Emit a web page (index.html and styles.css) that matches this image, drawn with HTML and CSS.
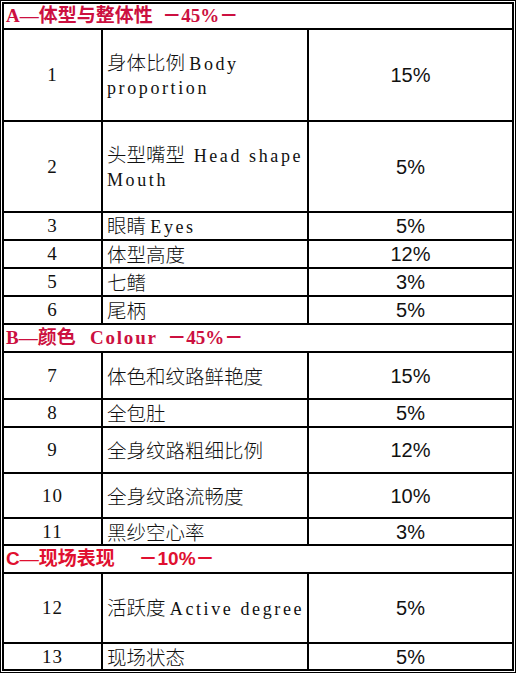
FILE: index.html
```html
<!DOCTYPE html>
<html lang="zh">
<head>
<meta charset="utf-8">
<link rel="stylesheet" href="styles.css">
</head>
<body>
<div class="sheet">
  <div class="grid">
    <div class="cell head"><span class="txt">A—体型与整体性&nbsp;&nbsp;－45%－</span></div>

    <div class="cell num">1</div>
    <div class="cell name"><span class="txt">身体比例 <span class="en">Body</span><br><span class="en">proportion</span></span></div>
    <div class="cell pct">15%</div>

    <div class="cell num">2</div>
    <div class="cell name"><span class="txt">头型嘴型&nbsp;&nbsp;<span class="en">Head shape</span><br><span class="en">Mouth</span></span></div>
    <div class="cell pct">5%</div>

    <div class="cell num">3</div>
    <div class="cell name"><span class="txt">眼睛 <span class="en">Eyes</span></span></div>
    <div class="cell pct">5%</div>

    <div class="cell num">4</div>
    <div class="cell name"><span class="txt">体型高度</span></div>
    <div class="cell pct">12%</div>

    <div class="cell num">5</div>
    <div class="cell name"><span class="txt">七鳍</span></div>
    <div class="cell pct">3%</div>

    <div class="cell num">6</div>
    <div class="cell name"><span class="txt">尾柄</span></div>
    <div class="cell pct">5%</div>

    <div class="cell head"><span class="txt">B—颜色&nbsp;&nbsp;&nbsp;<span class="en">Colour</span>&nbsp;&nbsp;－45%－</span></div>

    <div class="cell num">7</div>
    <div class="cell name"><span class="txt">体色和纹路鲜艳度</span></div>
    <div class="cell pct">15%</div>

    <div class="cell num">8</div>
    <div class="cell name"><span class="txt">全包肚</span></div>
    <div class="cell pct">5%</div>

    <div class="cell num">9</div>
    <div class="cell name"><span class="txt">全身纹路粗细比例</span></div>
    <div class="cell pct">12%</div>

    <div class="cell num">10</div>
    <div class="cell name"><span class="txt">全身纹路流畅度</span></div>
    <div class="cell pct">10%</div>

    <div class="cell num">11</div>
    <div class="cell name"><span class="txt">黑纱空心率</span></div>
    <div class="cell pct">3%</div>

    <div class="cell head head-c"><span class="txt"><span class="sans">C</span>—现场表现&nbsp;&nbsp;&nbsp;&nbsp;&nbsp;－<span class="sans">10%</span>－</span></div>

    <div class="cell num">12</div>
    <div class="cell name"><span class="txt">活跃度 <span class="en">Active degree</span></span></div>
    <div class="cell pct">5%</div>

    <div class="cell num">13</div>
    <div class="cell name"><span class="txt">现场状态</span></div>
    <div class="cell pct">5%</div>
  </div>
</div>
</body>
</html>
```

FILE: styles.css
```css
html, body {
  margin: 0;
  padding: 0;
  background: #ffffff;
}

.sheet {
  width: 516px;
  box-sizing: border-box;
  border: 1px solid #000;
  padding: 1px;
  background: #fff;
}

.grid {
  display: grid;
  grid-template-columns: 99px 206px 205px;
  grid-template-rows: 26px 92px 91px 28px 28px 28px 28px 28px 47px 28px 46px 45px 27px 28px 70px 27px;
  border-left: 2px solid #000;
  border-top: 2px solid #000;
}

.cell {
  box-sizing: border-box;
  border-right: 2px solid #000;
  border-bottom: 2px solid #000;
  display: flex;
  align-items: center;
  color: #111;
  min-width: 0;
  min-height: 0;
}

.txt {
  display: block;
  white-space: nowrap;
}

.head {
  grid-column: 1 / -1;
  padding-left: 2px;
  color: #cc1040;
  font-family: "Liberation Serif", "Noto Sans CJK SC", serif;
  font-weight: bold;
  font-size: 19px;
  line-height: 22px;
}

.head .en {
  font-weight: bold;
  font-size: 19px;
  letter-spacing: 1.8px;
}

.head-c {
  color: #e01030;
}

.head .sans {
  font-family: "Liberation Sans", "Noto Sans CJK SC", sans-serif;
  font-size: 19px;
}

.num {
  justify-content: center;
  font-family: "Liberation Serif", "Noto Sans CJK SC", serif;
  font-size: 19px;
  line-height: 22px;
  letter-spacing: 1px;
}

.name {
  padding-left: 4px;
  font-family: "Noto Sans CJK SC", sans-serif;
  font-weight: 300;
  font-size: 19.5px;
  line-height: 22px;
}

.en {
  font-family: "Liberation Serif", "Noto Sans CJK SC", serif;
  font-weight: normal;
  font-size: 18px;
  letter-spacing: 2.6px;
}

.pct {
  justify-content: center;
  font-family: "Liberation Sans", Arial, sans-serif;
  font-size: 20px;
  line-height: 22px;
}
```
